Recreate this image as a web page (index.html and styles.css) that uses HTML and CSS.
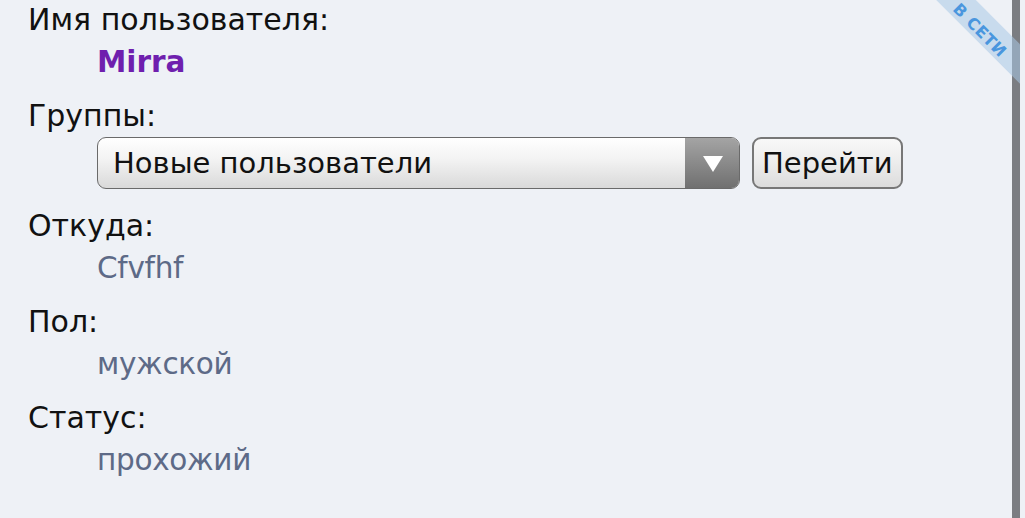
FILE: index.html
```html
<!DOCTYPE html>
<html lang="ru">
<head>
<meta charset="utf-8">
<link rel="stylesheet" href="styles.css">
</head>
<body>
<div class="page">
  <main class="profile">
    <section class="field">
      <div class="label">Имя пользователя:</div>
      <div class="value name">Mirra</div>
    </section>
    <section class="field">
      <div class="label">Группы:</div>
      <div class="value groups">
        <div class="select">
          <span class="select-text">Новые пользователи</span>
          <span class="select-arrow"></span>
        </div>
        <button class="go">Перейти</button>
      </div>
    </section>
    <section class="field">
      <div class="label">Откуда:</div>
      <div class="value">Cfvfhf</div>
    </section>
    <section class="field">
      <div class="label">Пол:</div>
      <div class="value">мужской</div>
    </section>
    <section class="field">
      <div class="label">Статус:</div>
      <div class="value">прохожий</div>
    </section>
  </main>
  <div class="scrollbar"></div>
  <div class="corner">
    <div class="ribbon"><span>В СЕТИ</span></div>
  </div>
</div>
</body>
</html>
```
FILE: styles.css
```css
html, body {
  margin: 0;
  padding: 0;
  background: #eef1f6;
  height: 100%;
  overflow: hidden;
}
.page {
  position: relative;
  display: flex;
  height: 518px;
  font-family: "DejaVu Sans", Verdana, sans-serif;
  font-size: 30px;
  color: #111;
}
.profile {
  flex: 1;
  padding: 0 0 0 28px;
  margin-top: -1px;
}
.field {
  margin-bottom: 12px;
}
.label {
  line-height: 42px;
  height: 42px;
}
.value {
  padding-left: 69px;
  line-height: 42px;
  height: 42px;
  color: #5d6a87;
  font-size: 29.5px;
  letter-spacing: -0.3px;
}
.value.name {
  color: #6f1fae;
  font-weight: bold;
  letter-spacing: 0;
}
.value.groups {
  height: auto;
  display: flex;
  gap: 12px;
  margin-bottom: 16px;
  letter-spacing: 0;
}
.select {
  width: 641px;
  height: 50px;
  border: 1px solid #6a6a6a;
  border-radius: 9px;
  background: linear-gradient(#ffffff, #f2f2f2 45%, #d9d9d9);
  display: flex;
  align-items: center;
  overflow: hidden;
  box-sizing: content-box;
}
.select-text {
  flex: 1;
  padding-left: 15px;
  color: #111;
  font-size: 29px;
}
.select-arrow {
  width: 54px;
  height: 100%;
  background: linear-gradient(#a4a4a4, #858585 60%, #707070);
  position: relative;
}
.select-arrow::after {
  content: "";
  position: absolute;
  left: 18px;
  top: 18px;
  border-left: 10px solid transparent;
  border-right: 10px solid transparent;
  border-top: 16px solid #fff;
}
.go {
  font-family: inherit;
  font-size: 29px;
  color: #111;
  height: 52px;
  padding: 0 8px;
  border: 2px solid #777;
  border-radius: 9px;
  background: linear-gradient(#f8f8f8, #ececec 50%, #dcdcdc);
}
.scrollbar {
  width: 8px;
  margin-right: 5px;
  background: #7b7d82;
}
.corner {
  position: absolute;
  top: 0;
  right: 5px;
  width: 110px;
  height: 100px;
  overflow: hidden;
}
.ribbon {
  position: absolute;
  left: -7px;
  top: 13px;
  width: 160px;
  height: 28px;
  transform: rotate(45deg);
  background: rgba(170, 200, 230, 0.55);
  text-align: center;
  line-height: 28px;
}
.ribbon span {
  font-size: 16px;
  font-weight: bold;
  color: #4a96de;
  letter-spacing: 0.5px;
}
```
